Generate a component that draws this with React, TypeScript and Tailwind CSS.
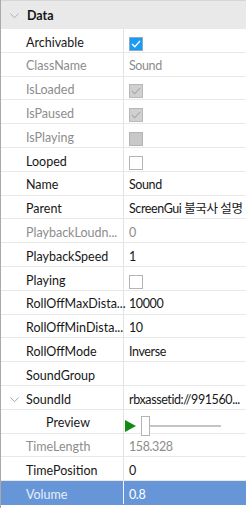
import React from "react";

type Row = {
  label: string;
  value?: string;
  kind?: "text" | "check" | "preview" | "empty";
  checked?: boolean;
  disabled?: boolean;
  expand?: boolean;
  indent?: boolean;
  selected?: boolean;
};

const rows: Row[] = [
  { label: "Archivable", kind: "check", checked: true },
  { label: "ClassName", value: "Sound", disabled: true },
  { label: "IsLoaded", kind: "check", checked: true, disabled: true },
  { label: "IsPaused", kind: "check", checked: true, disabled: true },
  { label: "IsPlaying", kind: "check", disabled: true },
  { label: "Looped", kind: "check" },
  { label: "Name", value: "Sound" },
  { label: "Parent", value: "ScreenGui 불국사 설명" },
  { label: "PlaybackLoudn...", value: "0", disabled: true },
  { label: "PlaybackSpeed", value: "1" },
  { label: "Playing", kind: "check" },
  { label: "RollOffMaxDista...", value: "10000" },
  { label: "RollOffMinDista...", value: "10" },
  { label: "RollOffMode", value: "Inverse" },
  { label: "SoundGroup", kind: "empty" },
  { label: "SoundId", value: "rbxassetid://991560...", expand: true },
  { label: "Preview", kind: "preview", indent: true },
  { label: "TimeLength", value: "158.328", disabled: true },
  { label: "TimePosition", value: "0" },
  { label: "Volume", value: "0.8", selected: true },
];

function Chevron({ color = "#9a9a9a" }: { color?: string }) {
  return (
    <svg width="9" height="6" viewBox="0 0 9 6" className="shrink-0">
      <path d="M0.5 0.5 L4.5 4.8 L8.5 0.5" fill="none" stroke={color} strokeWidth="1" />
    </svg>
  );
}

function Check({ checked, disabled }: { checked?: boolean; disabled?: boolean }) {
  if (checked && !disabled) {
    return (
      <div className="mt-[2px] w-[14px] h-[14px] bg-[#1a9cf5] border border-[#8ea9c4] flex items-center justify-center">
        <svg width="10" height="8" viewBox="0 0 10 8">
          <path d="M1 4 L3.8 6.8 L9 1" fill="none" stroke="#ffffff" strokeWidth="1.3" />
        </svg>
      </div>
    );
  }
  if (checked && disabled) {
    return (
      <div className="mt-[2px] w-[14px] h-[14px] bg-[#d0d0d0] border border-[#b8b8b8] flex items-center justify-center">
        <svg width="10" height="8" viewBox="0 0 10 8">
          <path d="M1 4 L3.8 6.8 L9 1" fill="none" stroke="#a6a6a6" strokeWidth="1.1" />
        </svg>
      </div>
    );
  }
  if (disabled) {
    return <div className="mt-[2px] w-[14px] h-[14px] bg-[#c8c8c8] border border-[#b4b4b4]" />;
  }
  return <div className="mt-[2px] w-[14px] h-[14px] bg-white border border-[#b4b4b4]" />;
}

function Preview() {
  return (
    <div className="flex items-center mt-[4px]">
      <svg width="11" height="12" viewBox="0 0 11 12" className="ml-[-4px]">
        <path d="M0 0 L11 6 L0 12 Z" fill="#128a12" />
      </svg>
      <div className="w-[9px] h-[20px] bg-white border border-[#b4b4b4] ml-[5px]" />
      <div className="w-[71px] h-[2px] bg-[#c4c4c4]" />
    </div>
  );
}

export default function App() {
  return (
    <div
      className="w-[246px] h-[508px] overflow-hidden bg-white border-l border-[#a9a9a9] text-[12.5px] leading-none"
      style={{ fontFamily: "Lato, 'Noto Sans CJK KR', sans-serif" }}
    >
      <div className="h-[29px] bg-[#e9e9e9] border-t border-[#d6d6d6] flex items-center pt-[2px]">
        <div className="w-[26px] flex justify-center pl-[1px]">
          <Chevron color="#b0b0b0" />
        </div>
        <span className="font-bold text-[#141414]">Data</span>
      </div>
      {rows.map((r) => {
        const labelColor = r.selected
          ? "text-[#e8eef8]"
          : r.disabled
          ? "text-[#8d8d8d]"
          : "text-[#171717]";
        const valueColor = r.selected
          ? "text-white"
          : r.disabled
          ? "text-[#8d8d8d]"
          : "text-[#171717]";
        return (
          <div
            key={r.label}
            className={`h-[23.8px] flex border-b ${
              r.selected ? "bg-[#6796d8] border-[#6796d8]" : "border-[#e8e8e8]"
            }`}
          >
            <div
              className={`w-[123px] shrink-0 flex items-center pt-[5px] border-r ${
                r.selected ? "border-[#f2f6fc]" : "border-[#e3e3e3]"
              }`}
            >
              <div className="w-[25px] flex justify-center shrink-0 pl-[1px]">
                {r.expand && <Chevron color="#a5a5a5" />}
              </div>
              <span
                className={`whitespace-nowrap ${labelColor} ${r.indent ? "pl-[20px] text-[#111111]" : ""}`}
              >
                {r.label}
              </span>
            </div>
            <div className="flex-1 min-w-0 flex items-center pt-[5px] pl-[5px] whitespace-nowrap">
              {r.kind === "check" && <Check checked={r.checked} disabled={r.disabled} />}
              {r.kind === "preview" && <Preview />}
              {(r.kind === undefined || r.kind === "text") && (
                <span className={`${valueColor} tracking-[-0.4px]`}>{r.value}</span>
              )}
            </div>
          </div>
        );
      })}
    </div>
  );
}
